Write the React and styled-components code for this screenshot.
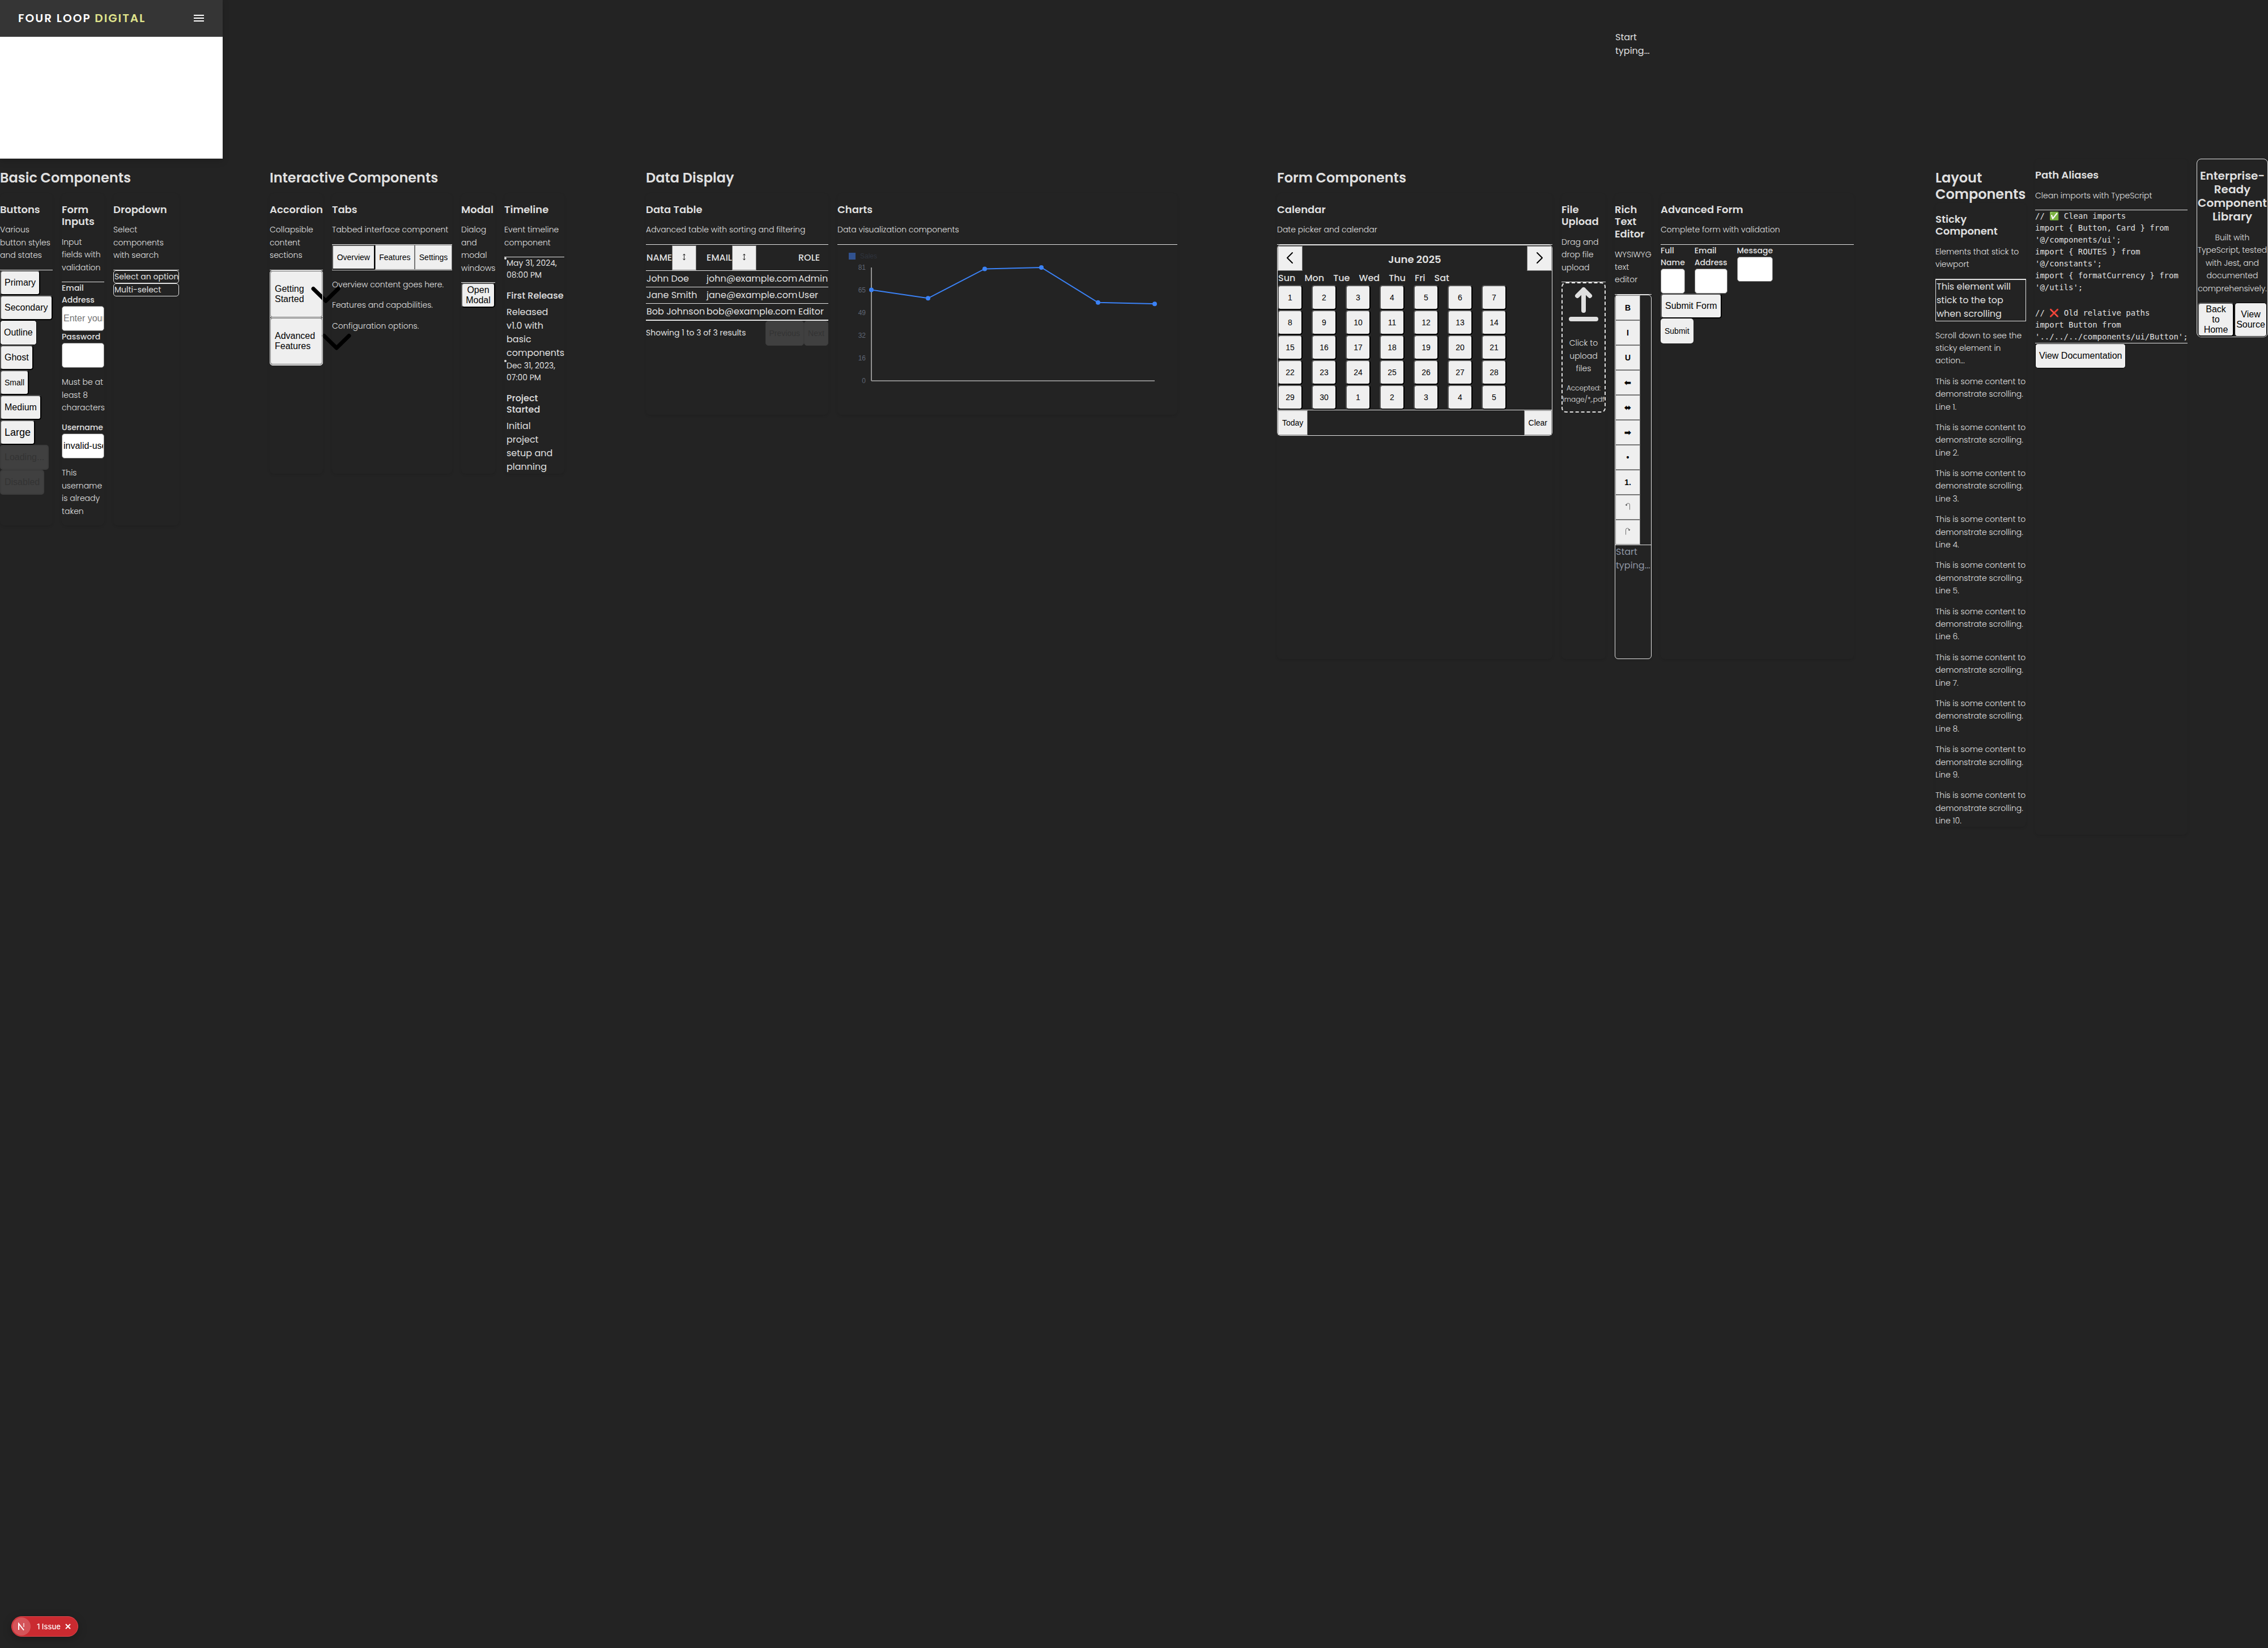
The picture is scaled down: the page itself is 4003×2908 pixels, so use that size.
import React from "react";
import styled, { createGlobalStyle, css } from "styled-components";

const ui = '"Poppins", "Inter", "Open Sans", sans-serif';
const system = '"Liberation Sans", Arial, sans-serif';
const mono = '"DejaVu Sans Mono", "Liberation Mono", monospace';
const line = "#e4e4e4";
const text = "#e0e0e0";

const GlobalStyle = createGlobalStyle`
  *, *::before, *::after { box-sizing: border-box; }
  body {
    margin: 0;
    background: #232323;
    color: ${text};
    font: 400 16px/24px ${ui};
  }
  h2, h3, h4, p, pre, ul { margin: 0; }
  ul { padding: 0; list-style: none; }
`;

/* ---------- page frame ---------- */

const Page = styled.div`
  min-height: 100vh;
`;

const TopBand = styled.div`
  display: grid;
  grid-template-columns: minmax(0, 393fr) minmax(0, 2458fr) minmax(0, 1152fr);
  height: 280px;
`;

const HeaderPanel = styled.header`
  grid-column: 1;
  display: flex;
  flex-direction: column;
  background: #fff;
  border-bottom: 1px solid #e5e5e5;
  box-shadow: 0 4px 12px rgba(0, 0, 0, 0.15);
`;

const Bar = styled.div`
  display: flex;
  align-items: center;
  justify-content: space-between;
  height: 65px;
  padding: 0 30px 0 32px;
  background: #353535;
  border-bottom: 1px solid #454545;
`;

const Brand = styled.a`
  color: #fff;
  font-size: 20px;
  font-weight: 600;
  letter-spacing: 2px;
  text-decoration: none;
  white-space: nowrap;
`;

const BrandAccent = styled.span`
  color: #e0e48c;
`;

const MenuButton = styled.button`
  display: flex;
  padding: 0;
  border: 0;
  background: none;
  color: #fff;
`;

const GhostPrompt = styled.p`
  grid-column: 3;
  width: min-content;
  padding-top: 54px;
`;

const Board = styled.main`
  display: grid;
  grid-template-columns:
    minmax(0, 476fr) minmax(0, 664fr) minmax(0, 1114fr) minmax(0, 1162fr)
    minmax(0, 176fr) minmax(0, 285fr) minmax(0, 126fr);
`;

const Section = styled.section`
  align-self: start;
  padding: 20px ${(p) => p.$end}px ${(p) => p.$bottom || 0}px 0;
`;

const Title = styled.h2`
  margin-bottom: ${(p) => (p.$tight ? 0 : 12)}px;
  font-size: 24px;
  font-weight: 600;
  line-height: 1.2;
`;

const Cards = styled.div`
  display: grid;
  gap: 16px;
  grid-template-columns: ${(p) => p.$cols.map((c) => `minmax(0, ${c}fr)`).join(" ")};
`;

const CardBox = styled.article`
  margin-right: ${(p) => p.$end || 0}px;
  border-radius: 8px;
  box-shadow: 0 2px 4px rgba(0, 0, 0, 0.1);
`;

const CardHead = styled.header`
  padding: 18px 0 14px;
  border-bottom: 1px solid ${line};
`;

const CardTitle = styled.h3`
  margin-bottom: 14px;
  font-size: 18px;
  font-weight: 600;
  line-height: 1.2;
`;

const Copy = styled.p`
  font-size: ${(p) => (p.$small ? 12 : 14)}px;
  font-weight: 300;
  line-height: 1.6;
`;

const Note = styled(Copy)`
  margin: 14px 0;
`;

/* ---------- buttons and fields ---------- */

const frames = {
  raised: css`
    padding: 0 6px;
    border: 2px outset #000;
    border-radius: 5px;
  `,
  outline: css`
    padding: 0 6px;
    border: 1px solid #000;
    border-radius: 5px;
  `,
  thin: css`
    padding: 0 6px;
    border: 1px solid #767676;
    border-radius: 0;
  `,
  wide: css`
    padding: 0 7px;
    border: 1px solid #767676;
    border-radius: 0;
  `,
  plain: css`
    padding: 0 7px;
    border: 0;
    border-radius: 5px;
  `,
};

const Button = styled.button`
  flex: none;
  min-width: 43px;
  min-height: 44px;
  ${(p) => frames[p.$frame || "raised"]}
  background: #efefef;
  color: #000;
  font-family: ${system};
  font-size: ${(p) => p.$size || 16}px;
  line-height: 18px;

  &:disabled {
    border-color: #3c3c3c;
    border-style: solid;
    background: #404040;
    color: #333;
  }
`;

const Stack = styled.div`
  display: flex;
  flex-direction: column;
  align-items: flex-start;
`;

const Label = styled.label`
  display: block;
  font-size: 14px;
  font-weight: 500;
  line-height: 21px;
`;

const Input = styled.input`
  display: block;
  width: 100%;
  min-width: 0;
  height: 44px;
  padding: 1px 1px 1px 2px;
  border: 1px solid #767676;
  border-radius: 5px;
  background: #fff;
  color: #000;
  font: 16px ${system};

  &::placeholder { color: #757575; }
`;

const Select = styled.select`
  display: block;
  width: 100%;
  height: 23px;
  padding: 0 0 0 1px;
  appearance: none;
  border: 1px solid ${line};
  border-radius: 5px;
  background: transparent;
  color: ${text};
  font: 400 14px/20px ${ui};
`;

/* ---------- accordion, tabs, timeline ---------- */

const AccordionBox = styled.div`
  border: 1px solid ${line};
  border-radius: 5px;
`;

const AccordionItem = styled.button`
  display: flex;
  align-items: center;
  width: 100%;
  height: 82px;
  margin-bottom: 1px;
  padding: 0 7px;
  border: 1px solid #767676;
  border-radius: 4px;
  outline: 1px solid ${line};
  background: #efefef;
  color: #000;
  font: 16px/18px ${system};
  text-align: left;

  svg { flex: none; width: 76px; height: 80px; }
`;

const TabList = styled.div`
  display: flex;
  height: 45px;
  border-bottom: 1px solid ${line};
`;

const Tab = styled.button`
  flex: auto;
  padding: 0 6px;
  border: ${(p) => (p.$active ? "2px outset #000" : "1px solid #767676")};
  background: #efefef;
  color: #000;
  font: 14px ${system};
`;

const Centered = styled(Button)`
  width: 100%;
`;

const Event = styled.li`
  display: flex;
`;

const Dot = styled.span`
  flex: none;
  width: 4px;
  height: 4px;
  border-radius: 50%;
  background: ${text};
`;

const EventDate = styled.time`
  display: block;
  font-size: 14px;
  line-height: 21px;
`;

const EventTitle = styled.h4`
  margin: 16px 0 8px;
  font-size: 16px;
  font-weight: 500;
  line-height: 1.2;
`;

/* ---------- data ---------- */

const Table = styled.table`
  width: 100%;
  table-layout: fixed;
  border-collapse: collapse;
  border-bottom: 2px solid ${line};

  th, td {
    height: 29px;
    padding: 0 1px;
    border-bottom: 1px solid ${line};
    text-align: left;
    white-space: nowrap;
  }
  th {
    height: 46px;
    font-weight: 500;
  }
`;

const Col = styled.col`
  width: ${(p) => p.$w};
`;

const HeadCell = styled.div`
  display: flex;
  align-items: center;
`;

const TableFoot = styled.div`
  display: flex;
  align-items: center;
  justify-content: space-between;
`;

const Count = styled.span`
  font-size: 14px;
  line-height: 21px;
`;

const Row = styled.div`
  display: flex;
`;

const Chart = styled.svg`
  display: block;
  width: 100%;
  height: 300px;
  font: 12px ${system};
`;

/* ---------- calendar ---------- */

const CalendarBox = styled.div`
  border: 1px solid ${line};
  border-radius: 6px;
`;

const CalendarHead = styled.div`
  display: flex;
  align-items: center;
  justify-content: space-between;
  height: 46px;
`;

const IconButton = styled(Button)`
  display: grid;
  place-items: center;
  width: 44px;
`;

const Month = styled.h4`
  padding-top: 4px;
  font-size: 18px;
  font-weight: 600;
`;

const Weekdays = styled.div`
  display: flex;
  gap: 16px;
  padding-left: 1px;
  font-weight: 500;
`;

const Days = styled.div`
  display: grid;
  grid-template-columns: repeat(7, 44px);
  grid-auto-rows: 44px;
  column-gap: 16px;
`;

const CalendarFoot = styled.div`
  display: flex;
  justify-content: space-between;
  border-top: 1px solid ${line};
`;

/* ---------- upload, editor, form ---------- */

const Dropzone = styled.div`
  border: 2px dashed ${line};
  border-radius: 8px;
  text-align: center;

  svg { display: block; width: 100%; height: 80px; }
`;

const Accepted = styled(Copy)`
  padding-bottom: 12px;
`;

const EditorBox = styled.div`
  border: 1px solid ${line};
  border-radius: 6px;
`;

const Toolbar = styled.div`
  display: flex;
  flex-direction: column;
  align-items: flex-start;
  border-bottom: 1px solid ${line};
`;

const Tool = styled.button`
  width: 44px;
  height: 44px;
  padding: 0;
  border: 1px solid #767676;
  background: #efefef;
  color: #000;
  font: 700 14px ${system};

  &:disabled { color: #6f6f6f; font-weight: 400; }
`;

const EditorArea = styled.textarea`
  display: block;
  width: 100%;
  height: 200px;
  padding: 0 0 0 1px;
  border: 0;
  background: transparent;
  color: ${text};
  font: 400 16px/24px ${ui};
  resize: none;
  overflow: hidden;

  &::placeholder { color: #8e95a3; }
`;

const Fields = styled.div`
  display: flex;
  align-items: flex-start;
  gap: 17px;
`;

const Field = styled.div`
  width: min-content;
`;

/* ---------- layout, aliases, call to action ---------- */

const StickyBox = styled.div`
  position: sticky;
  top: 0;
  padding: 0 1px;
  border: 1px solid ${line};
`;

const Paragraphs = styled.div`
  display: grid;
  gap: 14px;
  padding-top: 14px;
`;

const CodeBlock = styled.div`
  display: grid;
  gap: 24px;
  border-bottom: 1px solid ${line};
`;

const Code = styled.pre`
  font: 14px/21px ${mono};
`;

const Cta = styled.aside`
  align-self: start;
  padding-top: 17px;
  border: 1px solid ${line};
  border-radius: 8px;
  text-align: center;
`;

const CtaTitle = styled.h3`
  font-size: 20px;
  font-weight: 600;
  line-height: 1.2;
`;

const CtaActions = styled.div`
  display: grid;
  grid-template-columns: minmax(0, 64fr) minmax(0, 57fr);
  gap: 1px;
  padding: 0 1px;
`;

const CtaButton = styled(Button)`
  min-width: 0;
  min-height: 60px;
  padding: 0 ${(p) => p.$pad}px;
`;

/* ---------- issue badge ---------- */

const Issue = styled.div`
  position: fixed;
  left: 20px;
  bottom: 20px;
  display: flex;
  align-items: center;
  height: 36px;
  padding-left: 1px;
  border: 1px solid #e5484d;
  border-radius: 18px;
  background: #ca2a30;
  box-shadow: 0 4px 16px rgba(0, 0, 0, 0.25);
  color: #fff;
  font: 500 13px "Inter", "Liberation Sans", sans-serif;
`;

const Mark = styled.span`
  display: grid;
  place-items: center;
  width: 32px;
  height: 32px;
  border-radius: 50%;
  background: rgba(255, 255, 255, 0.2);
`;

const IssueText = styled.span`
  padding: 0 8px 0 11px;
  white-space: nowrap;
`;

const Dismiss = styled.button`
  display: flex;
  padding: 0 12px 0 0;
  border: 0;
  background: none;
  color: #fff;
`;

/* ---------- parts ---------- */

function Card({ title, text: copy, end, children }) {
  return (
    <CardBox $end={end}>
      <CardHead>
        <CardTitle>{title}</CardTitle>
        <Copy>{copy}</Copy>
      </CardHead>
      {children}
    </CardBox>
  );
}

function Chevron() {
  return (
    <svg viewBox="0 0 76 80" fill="none" stroke="currentColor" strokeWidth="7" strokeLinecap="round" strokeLinejoin="round" aria-hidden="true">
      <path d="M16 30.5 38 52l22-21.5" />
    </svg>
  );
}

function Angle({ d }) {
  return (
    <svg width="24" height="24" viewBox="0 0 24 24" fill="none" stroke="currentColor" strokeWidth="2" strokeLinecap="round" strokeLinejoin="round" aria-hidden="true">
      <path d={d} />
    </svg>
  );
}

function SortGlyph() {
  return (
    <svg width="5" height="13" viewBox="0 0 5 13" fill="none" stroke="#222" aria-hidden="true">
      <path d="M2.500 1v11M.5 3.500l2-2.500 2 2.500M.5 9.500l2 2.500 2-2.500" />
    </svg>
  );
}

const sales = [65, 59, 80, 81, 56, 55];

function SalesChart() {
  const points = sales.map((v, i) => [60 + i * 100, 240 - (v / 81) * 200]);
  return (
    <Chart viewBox="0 0 600 300" role="img" aria-label="Sales">
      <rect x="20" y="14" width="12" height="12" fill="#31528f" />
      <text x="40" y="24" fill="#2f343e">Sales</text>
      {[81, 65, 49, 32, 16, 0].map((v, i) => (
        <text key={v} x="50" y={44 + i * 40} textAnchor="end" fill="#5f6675">{v}</text>
      ))}
      <path d="M60 40v200" stroke="#939393" strokeWidth="2" />
      <path d="M60 240h500" stroke="#8a8a8a" strokeWidth="2" />
      <polyline points={points.map((p) => p.join(",")).join(" ")} fill="none" stroke="#3b82f6" strokeWidth="2" />
      {points.map(([x, y]) => (
        <circle key={x} cx={x} cy={y} r="4" fill="#3b82f6" />
      ))}
    </Chart>
  );
}

const people = [
  ["John Doe", "john@example.com", "Admin"],
  ["Jane Smith", "jane@example.com", "User"],
  ["Bob Johnson", "bob@example.com", "Editor"],
];

const days = Array.from({ length: 35 }, (_, i) => (i < 30 ? i + 1 : i - 29));

const tools = [
  ["B", "Bold"], ["I", "Italic"], ["U", "Underline"],
  ["⬅", "Align left"], ["⬌", "Align center"], ["➡", "Align right"],
  ["•", "Bullet list"], ["1.", "Numbered list"],
];

const cleanImports = `// ✅ Clean imports
import { Button, Card } from
'@/components/ui';
import { ROUTES } from
'@/constants';
import { formatCurrency } from
'@/utils';`;

const relativeImports = `// ❌ Old relative paths
import Button from
'../../../components/ui/Button';`;

export default function App() {
  return (
    <Page>
      <GlobalStyle />
      <TopBand>
        <HeaderPanel>
          <Bar>
            <Brand href="#">
              FOUR LOOP <BrandAccent>DIGITAL</BrandAccent>
            </Brand>
            <MenuButton aria-label="Menu">
              <svg width="24" height="24" viewBox="0 0 24 24" fill="currentColor" aria-hidden="true">
                <path d="M3 6h18v2H3zM3 11h18v2H3zM3 16h18v2H3z" />
              </svg>
            </MenuButton>
          </Bar>
        </HeaderPanel>
        <GhostPrompt>Start typing...</GhostPrompt>
      </TopBand>

      <Board>
        <Section $end={160}>
          <Title>Basic Components</Title>
          <Cards $cols={[93, 75, 116]}>
            <Card title="Buttons" text="Various button styles and states">
              <Stack>
                <Button>Primary</Button>
                <Button>Secondary</Button>
                <Button $frame="outline">Outline</Button>
                <Button>Ghost</Button>
                <Button $size={14}>Small</Button>
                <Button>Medium</Button>
                <Button $size={18}>Large</Button>
                <Button disabled>Loading...</Button>
                <Button disabled>Disabled</Button>
              </Stack>
            </Card>
            <Card title="Form Inputs" text="Input fields with validation">
              <Label htmlFor="email">Email Address</Label>
              <Input id="email" type="email" placeholder="Enter your email" />
              <Label htmlFor="password">Password</Label>
              <Input id="password" type="password" />
              <Note>Must be at least 8 characters</Note>
              <Label htmlFor="username">Username</Label>
              <Input id="username" defaultValue="invalid-username" />
              <Note>This username is already taken</Note>
            </Card>
            <Card title="Dropdown" text="Select components with search">
              <Select aria-label="Select an option">
                <option>Select an option</option>
              </Select>
              <Select aria-label="Multi-select">
                <option>Multi-select</option>
              </Select>
            </Card>
          </Cards>
        </Section>

        <Section $end={144}>
          <Title>Interactive Components</Title>
          <Cards $cols={[94, 212, 60, 106]}>
            <Card title="Accordion" text="Collapsible content sections">
              <AccordionBox>
                <AccordionItem>
                  <span>Getting Started</span>
                  <Chevron />
                </AccordionItem>
                <AccordionItem>
                  <span>Advanced Features</span>
                  <Chevron />
                </AccordionItem>
              </AccordionBox>
            </Card>
            <Card title="Tabs" text="Tabbed interface component">
              <TabList role="tablist">
                <Tab role="tab" $active>Overview</Tab>
                <Tab role="tab">Features</Tab>
                <Tab role="tab">Settings</Tab>
              </TabList>
              <Note>Overview content goes here.</Note>
              <Note>Features and capabilities.</Note>
              <Note>Configuration options.</Note>
            </Card>
            <Card title="Modal" text="Dialog and modal windows">
              <Centered>Open Modal</Centered>
            </Card>
            <Card title="Timeline" text="Event timeline component">
              <ul>
                <Event>
                  <Dot />
                  <div>
                    <EventDate>May 31, 2024, 08:00 PM</EventDate>
                    <EventTitle>First Release</EventTitle>
                    <p>Released v1.0 with basic components</p>
                  </div>
                </Event>
                <Event>
                  <Dot />
                  <div>
                    <EventDate>Dec 31, 2023, 07:00 PM</EventDate>
                    <EventTitle>Project Started</EventTitle>
                    <p>Initial project setup and planning</p>
                  </div>
                </Event>
              </ul>
            </Card>
          </Cards>
        </Section>

        <Section $end={176}>
          <Title>Data Display</Title>
          <Cards $cols={[322, 600]}>
            <Card title="Data Table" text="Advanced table with sorting and filtering">
              <Table>
                <colgroup>
                  <Col $w="106px" />
                  <Col $w="162px" />
                  <Col $w="auto" />
                </colgroup>
                <thead>
                  <tr>
                    <th><HeadCell>NAME<Button $frame="thin" aria-label="Sort by name"><SortGlyph /></Button></HeadCell></th>
                    <th><HeadCell>EMAIL<Button $frame="thin" aria-label="Sort by email"><SortGlyph /></Button></HeadCell></th>
                    <th>ROLE</th>
                  </tr>
                </thead>
                <tbody>
                  {people.map((row) => (
                    <tr key={row[1]}>
                      {row.map((cell) => <td key={cell}>{cell}</td>)}
                    </tr>
                  ))}
                </tbody>
              </Table>
              <TableFoot>
                <Count>Showing 1 to 3 of 3 results</Count>
                <Row>
                  <Button $frame="outline" $size={14} disabled>Previous</Button>
                  <Button $frame="outline" $size={14} disabled>Next</Button>
                </Row>
              </TableFoot>
            </Card>
            <Card title="Charts" text="Data visualization components">
              <SalesChart />
            </Card>
          </Cards>
        </Section>

        <Section $end={144}>
          <Title>Form Components</Title>
          <Cards $cols={[486, 78, 65, 341]}>
            <Card title="Calendar" text="Date picker and calendar">
              <CalendarBox>
                <CalendarHead>
                  <IconButton $frame="thin" aria-label="Previous month"><Angle d="M16 2 7 11l9 9" /></IconButton>
                  <Month>June 2025</Month>
                  <IconButton $frame="thin" aria-label="Next month"><Angle d="m8 2 9 9-9 9" /></IconButton>
                </CalendarHead>
                <Weekdays>
                  {["Sun", "Mon", "Tue", "Wed", "Thu", "Fri", "Sat"].map((d) => <span key={d}>{d}</span>)}
                </Weekdays>
                <Days>
                  {days.map((d, i) => <Button key={i} $size={14}>{d}</Button>)}
                </Days>
                <CalendarFoot>
                  <Button $frame="wide" $size={14}>Today</Button>
                  <Button $frame="wide" $size={14}>Clear</Button>
                </CalendarFoot>
              </CalendarBox>
            </Card>
            <Card title="File Upload" text="Drag and drop file upload">
              <Dropzone>
                <svg viewBox="0 0 74 80" fill="none" stroke={text} strokeWidth="8" strokeLinecap="round" strokeLinejoin="round" aria-hidden="true">
                  <path d="M37 48V11M26 22l11-11 11 11M15 63h44" />
                </svg>
                <Note>Click to upload files</Note>
                <Accepted $small>Accepted: image/*,.pdf</Accepted>
              </Dropzone>
            </Card>
            <Card title="Rich Text Editor" text="WYSIWYG text editor">
              <EditorBox>
                <Toolbar>
                  {tools.map(([glyph, name]) => <Tool key={name} aria-label={name}>{glyph}</Tool>)}
                  <Tool aria-label="Undo" disabled>
                    <svg width="10" height="14" viewBox="0 0 10 14" fill="none" stroke="currentColor" aria-hidden="true">
                      <path d="M8.500 13.500V5a3 3 0 0 0-6 0" />
                      <path d="M.5 4.500h4l-2 2z" fill="#222" stroke="none" />
                    </svg>
                  </Tool>
                  <Tool aria-label="Redo" disabled>
                    <svg width="10" height="14" viewBox="0 0 10 14" fill="none" stroke="currentColor" aria-hidden="true">
                      <path d="M1.500 13.500V5a3 3 0 0 1 6 0" />
                      <path d="M5.500 4.500h4l-2 2z" fill="#222" stroke="none" />
                    </svg>
                  </Tool>
                </Toolbar>
                <EditorArea aria-label="Editor" placeholder="Start typing..." />
              </EditorBox>
            </Card>
            <Card title="Advanced Form" text="Complete form with validation">
              <Fields>
                <Field>
                  <Label htmlFor="full-name">Full Name</Label>
                  <Input id="full-name" />
                </Field>
                <Field>
                  <Label htmlFor="contact-email">Email Address</Label>
                  <Input id="contact-email" type="email" />
                </Field>
                <Field>
                  <Label htmlFor="message">Message</Label>
                  <Input id="message" />
                </Field>
              </Fields>
              <Stack>
                <Button>Submit Form</Button>
                <Button $frame="plain" $size={14}>Submit</Button>
              </Stack>
            </Card>
          </Cards>
        </Section>

        <Section $end={16} $bottom={14}>
          <Title $tight>Layout Components</Title>
          <Card title="Sticky Component" text="Elements that stick to viewport">
            <StickyBox>This element will stick to the top when scrolling</StickyBox>
            <Paragraphs>
              <Copy>Scroll down to see the sticky element in action...</Copy>
              {Array.from({ length: 10 }, (_, i) => (
                <Copy key={i}>{`This is some content to demonstrate scrolling. Line ${i + 1}.`}</Copy>
              ))}
            </Paragraphs>
          </Card>
        </Section>

        <Card title="Path Aliases" text="Clean imports with TypeScript" end={16}>
          <CodeBlock>
            <Code>{cleanImports}</Code>
            <Code>{relativeImports}</Code>
          </CodeBlock>
          <Stack>
            <Button $frame="outline">View Documentation</Button>
          </Stack>
        </Card>

        <Cta>
          <CtaTitle>Enterprise-Ready Component Library</CtaTitle>
          <Note>Built with TypeScript, tested with Jest, and documented comprehensively.</Note>
          <CtaActions>
            <CtaButton $pad={6}>Back to Home</CtaButton>
            <CtaButton $pad={1} $frame="outline">View Source</CtaButton>
          </CtaActions>
        </Cta>
      </Board>

      <Issue>
        <Mark>
          <svg width="14" height="14" viewBox="0 0 14 14" fill="none" stroke="#fff" strokeWidth="2" aria-hidden="true">
            <path d="M2 13V2l9 11.500" />
            <path d="M11 1v7" opacity=".6" />
          </svg>
        </Mark>
        <IssueText>1 Issue</IssueText>
        <Dismiss aria-label="Dismiss">
          <svg width="10" height="10" viewBox="0 0 10 10" fill="none" stroke="currentColor" strokeWidth="2" aria-hidden="true">
            <path d="m1 1 8 8M9 1 1 9" />
          </svg>
        </Dismiss>
      </Issue>
    </Page>
  );
}
